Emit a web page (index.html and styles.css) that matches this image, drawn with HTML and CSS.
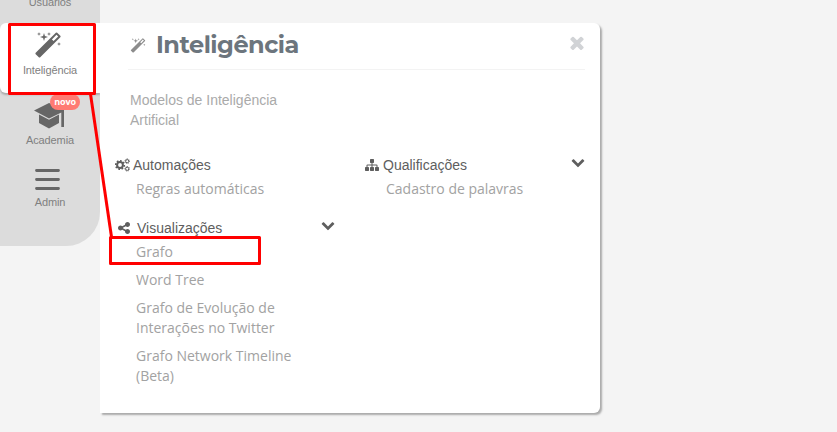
FILE: index.html
```html
<!DOCTYPE html>
<html lang="pt-BR">
<head>
  <meta charset="UTF-8">
  <title>Inteligência</title>
  <meta name="viewport" content="width=device-width, initial-scale=1">
  <link rel="stylesheet" href="styles.css">
</head>
<body>
  <svg class="symbols">
    <symbol id="magic" viewBox="0 0 1792 1792"><path d="M1254 581l293-293-107-107-293 293zm447-293q0 27-18 45l-1286 1286q-18 18-45 18t-45-18l-198-198q-18-18-18-45t18-45l1286-1286q18-18 45-18t45 18l198 198q18 18 18 45zm-1351-190l98 30-98 30-30 98-30-98-98-30 98-30 30-98zm350 162l196 60-196 60-60 196-60-196-196-60 196-60 60-196zm930 478l98 30-98 30-30 98-30-98-98-30 98-30 30-98zm-640-640l98 30-98 30-30 98-30-98-98-30 98-30 30-98z"/></symbol>
    <symbol id="chevron" viewBox="0 0 1792 1792"><path d="M1683 808l-742 741q-19 19-45 19t-45-19l-742-741q-19-19-19-45.500t19-45.500l166-165q19-19 45-19t45 19l531 531 531-531q19-19 45-19t45 19l166 165q19 19 19 45.500t-19 45.500z"/></symbol>
  </svg>

  <div class="layout">
    <nav class="sidebar">
      <a class="item users">Usuários</a>
      <a class="item active">
        <svg class="icon-magic"><use href="#magic"/></svg>
        <span>Inteligência</span>
      </a>
      <a class="item academy">
        <svg class="icon-cap" viewBox="0 0 30 26"><path d="M0 7.500L15 0l15 5.500V24h-2.700V9.500L15 15.500z"/><path d="M5 11.500l10 5.300 10-5.300v8.500l-10 5.500L5 20z"/></svg>
        <span class="badge">novo</span>
        <span>Academia</span>
      </a>
      <a class="item admin">
        <svg class="icon-bars" viewBox="0 0 25 22"><path d="M1.500 1.500h22M1.500 10.500h22M1.500 19.500h22"/></svg>
        <span>Admin</span>
      </a>
    </nav>

    <main class="panel">
      <header class="panel-header">
        <svg class="title-icon"><use href="#magic"/></svg>
        <h1>Inteligência</h1>
        <svg class="close" viewBox="302 302 1188 1252"><path d="M1490 1322q0 40-28 68l-136 136q-28 28-68 28t-68-28l-294-294-294 294q-28 28-68 28t-68-28l-136-136q-28-28-28-68t28-68l294-294-294-294q-28-28-28-68t28-68l136-136q28-28 68-28t68 28l294 294 294-294q28-28 68-28t68 28l136 136q28 28 28 68t-28 68l-294 294 294 294q28 28 28 68z"/></svg>
      </header>
      <p class="intro">Modelos de Inteligência Artificial</p>

      <div class="columns">
        <div class="column">
          <section>
            <h2>
              <svg class="icon-cogs" viewBox="0 0 15 14">
                <circle class="teeth" cx="5" cy="7" r="4.300" pathLength="80"/>
                <circle class="ring" cx="5" cy="7" r="2.900"/>
                <circle class="teeth small" cx="12.200" cy="3.200" r="2.300" pathLength="80"/>
                <circle class="ring small" cx="12.200" cy="3.200" r="1.600"/>
                <circle class="teeth small" cx="12.200" cy="10.800" r="2.300" pathLength="80"/>
                <circle class="ring small" cx="12.200" cy="10.800" r="1.600"/>
              </svg>
              <span>Automações</span>
            </h2>
            <ul>
              <li>Regras automáticas</li>
            </ul>
          </section>
          <section>
            <h2>
              <svg class="icon-share" viewBox="128 128 1536 1536"><path d="M1344 1024q133 0 226.500 93.500t93.500 226.500-93.500 226.500-226.500 93.500-226.500-93.500-93.500-226.500q0-12 2-34l-360-180q-92 86-218 86-133 0-226.500-93.500t-93.500-226.500 93.500-226.500 226.500-93.500q126 0 218 86l360-180q-2-22-2-34 0-133 93.500-226.500t226.500-93.500 226.500 93.500 93.500 226.500-93.500 226.500-226.500 93.500q-126 0-218-86l-360 180q2 22 2 34t-2 34l360 180q92-86 218-86z"/></svg>
              <span>Visualizações</span>
              <svg class="toggle"><use href="#chevron"/></svg>
            </h2>
            <ul>
              <li>Grafo</li>
              <li>Word Tree</li>
              <li>Grafo de Evolução de Interações no Twitter</li>
              <li>Grafo Network Timeline (Beta)</li>
            </ul>
          </section>
        </div>
        <div class="column">
          <section>
            <h2>
              <svg class="icon-sitemap" viewBox="0 128 1792 1536"><path d="M1792 1248v320q0 40-28 68t-68 28h-320q-40 0-68-28t-28-68v-320q0-40 28-68t68-28h96v-192h-512v192h96q40 0 68 28t28 68v320q0 40-28 68t-68 28h-320q-40 0-68-28t-28-68v-320q0-40 28-68t68-28h96v-192h-512v192h96q40 0 68 28t28 68v320q0 40-28 68t-68 28h-320q-40 0-68-28t-28-68v-320q0-40 28-68t68-28h96v-192q0-52 38-90t90-38h512v-192h-96q-40 0-68-28t-28-68v-320q0-40 28-68t68-28h320q40 0 68 28t28 68v320q0 40-28 68t-68 28h-96v192h512q52 0 90 38t38 90v192h96q40 0 68 28t28 68z"/></svg>
              <span>Qualificações</span>
              <svg class="toggle"><use href="#chevron"/></svg>
            </h2>
            <ul>
              <li>Cadastro de palavras</li>
            </ul>
          </section>
        </div>
      </div>
    </main>
  </div>

  <!-- red callouts over the menu -->
  <svg class="marks" viewBox="0 0 837 432">
    <rect x="9.500" y="24.500" width="85" height="69"/>
    <path d="M90.500 94L111.500 237"/>
    <rect x="110.500" y="237.500" width="149" height="26"/>
  </svg>
</body>
</html>
```

FILE: styles.css
```css
* { box-sizing: border-box; }
body {
  margin: 0;
  height: 432px;
  overflow: hidden;
  background: #f4f4f4;
  font-family: "Liberation Sans", Arial, sans-serif;
  color: #666;
}
svg { display: block; fill: currentColor; flex: none; }
.symbols { position: absolute; width: 0; height: 0; }
.layout { display: flex; align-items: flex-start; }

.sidebar {
  width: 100px;
  height: 246px;
  background: #dcdcdc;
  border-radius: 0 0 34px 0;
}
.item {
  display: flex;
  flex-direction: column;
  align-items: center;
  font-size: 11px;
  line-height: 14px;
  letter-spacing: -0.12px;
  color: #808080;
}
.item svg { color: #666; }
.users { height: 23px; margin-top: -5px; margin-bottom: 5px; }
.active {
  height: 70px;
  padding-top: 9px;
  background: #fff;
  border-radius: 6px 0 0 6px;
  box-shadow: 0 2px 2px #aaa;
}
.icon-magic { width: 28px; height: 28px; margin: 0 5px 3px 0; }
.academy { position: relative; padding-top: 10px; }
.icon-cap { width: 30px; height: 26px; margin: 0 3px 4px 0; }
.badge {
  position: absolute;
  left: 50px;
  top: 1px;
  width: 30px;
  height: 16px;
  border-radius: 8px;
  background: #ff7b73;
  color: #fff;
  font: bold 9px/16px "Open Sans", sans-serif;
  text-align: center;
}
.admin { padding-top: 22px; }
.icon-bars {
  width: 25px;
  height: 22px;
  margin: 0 5px 4px 0;
  fill: none;
  stroke: #666;
  stroke-width: 2.8;
  stroke-linecap: round;
}

.panel {
  width: 500px;
  height: 390px;
  margin-top: 23px;
  background: #fff;
  border-radius: 0 6px 6px 0;
  box-shadow: 2px 2px 2px #aaa;
}
.panel-header {
  display: flex;
  align-items: center;
  height: 47px;
  margin: 0 15px 0 28px;
  padding: 0 1px 3px 2px;
  border-bottom: 1px solid #f3f3f3;
}
.title-icon { width: 16px; height: 16px; margin-top: 3px; color: #8c8c8c; }
h1 {
  flex: 1;
  margin: 0 0 0 10px;
  font: bold 24px/30px Montserrat, Inter, sans-serif;
  letter-spacing: -0.5px;
  color: #6c757d;
}
.close { width: 14px; height: 14px; margin-bottom: 3px; color: #d1d3d6; }
.intro {
  width: 180px;
  margin: 20px 0 0 30px;
  font-size: 14px;
  line-height: 20px;
  color: #aaa;
}
.columns { display: flex; padding: 25px 0 0 15px; }
.column { flex: none; width: 250px; }
h2 {
  display: flex;
  align-items: center;
  height: 20px;
  margin: 0;
  font-size: 14px;
  font-weight: normal;
  color: #5e5e5e;
}
.icon-cogs { width: 15px; height: 14px; margin-right: 3px; fill: none; stroke: currentColor; }
.ring { stroke-width: 2; }
.ring.small { stroke-width: 1; }
.teeth { stroke-width: 1.600; stroke-dasharray: 5 5; }
.teeth.small { stroke-width: 1; }
.icon-share { width: 12px; height: 12px; margin: 0 7px 0 3px; }
.icon-sitemap { width: 14px; height: 12px; margin-right: 4px; }
.toggle { width: 14px; height: 14px; margin: 0 30px 6px auto; }
ul { list-style: none; margin: 0 0 15px; padding: 0 0 0 21px; }
li {
  width: 175px;
  padding: 4px 0;
  font: 14px/20px "Open Sans", "Noto Sans", sans-serif;
  color: #a2a2a2;
}

.marks {
  position: absolute;
  left: 0;
  top: 0;
  width: 837px;
  height: 432px;
  fill: none;
  stroke: #f00;
  stroke-width: 3;
  stroke-linejoin: round;
  pointer-events: none;
}
```
